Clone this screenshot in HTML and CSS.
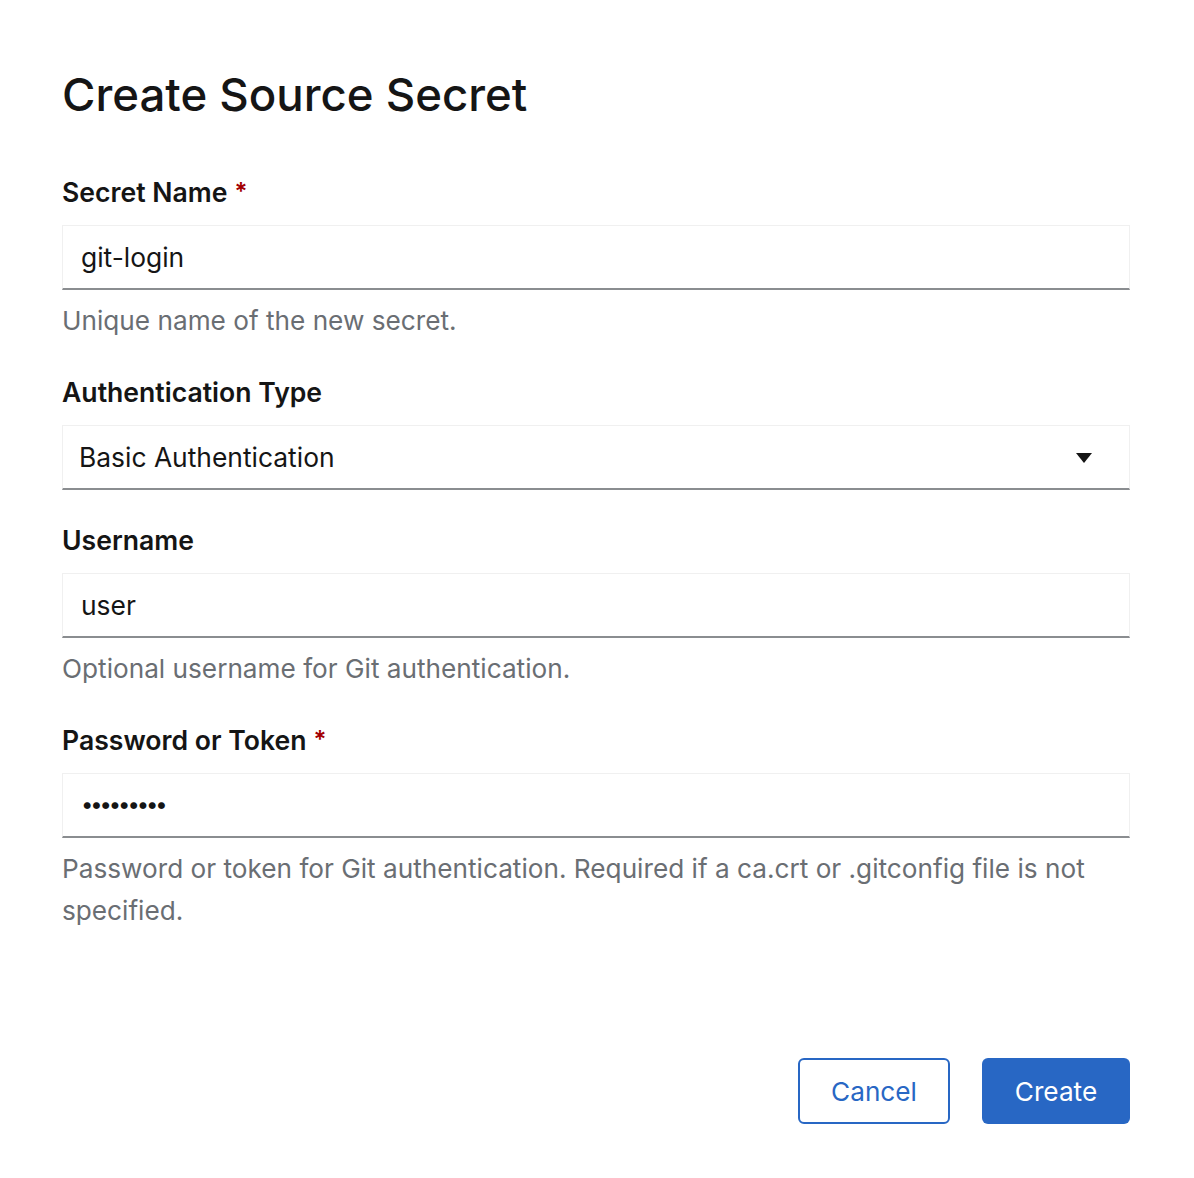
FILE: index.html
```html
<!DOCTYPE html>
<html lang="en">
<head>
<meta charset="utf-8">
<title>Create Source Secret</title>
<link rel="stylesheet" href="styles.css">
</head>
<body>
<div class="modal">
  <h1 class="modal-title">Create Source Secret</h1>
  <form class="form">
    <div class="group">
      <label class="label">Secret Name<span class="req">*</span></label>
      <div class="input"><span class="value">git-login</span></div>
      <div class="helper">Unique name of the new secret.</div>
    </div>
    <div class="group">
      <label class="label">Authentication Type</label>
      <div class="input select">
        <span class="value">Basic Authentication</span>
        <svg class="caret" width="16" height="10" viewBox="0 0 16 10"><path d="M0 0 H16 L8 10 Z" fill="#151515"/></svg>
      </div>
    </div>
    <div class="group">
      <label class="label">Username</label>
      <div class="input"><span class="value">user</span></div>
      <div class="helper">Optional username for Git authentication.</div>
    </div>
    <div class="group">
      <label class="label">Password or Token<span class="req">*</span></label>
      <div class="input"><span class="value dots">•••••••••</span></div>
      <div class="helper">Password or token for Git authentication. Required if a ca.crt or .gitconfig file is not specified.</div>
    </div>
  </form>
  <div class="footer">
    <button class="btn btn-secondary" type="button">Cancel</button>
    <button class="btn btn-primary" type="button">Create</button>
  </div>
</div>
</body>
</html>
```
FILE: styles.css
```css
html, body {
  margin: 0;
  background: #ffffff;
}
body {
  font-family: Inter, "Noto Sans", sans-serif;
  color: #151515;
}
.modal {
  width: 1068px;
  padding: 65px 0 0 62px;
}
.modal-title {
  margin: 0;
  font-size: 45.6px;
  line-height: 60px;
  font-weight: 500;
  color: #151515;
}
.form {
  display: flex;
  flex-direction: column;
  gap: 32px;
  margin-top: 49px;
}
.group {
  display: flex;
  flex-direction: column;
}
.label {
  font-size: 26.6px;
  line-height: 36px;
  font-weight: 600;
  color: #151515;
  margin-bottom: 15px;
}
.req {
  color: #a30000;
  margin-left: 7px;
  font-size: 24px;
  vertical-align: top;
}
.input {
  box-sizing: border-box;
  height: 65px;
  border: 1px solid #f0f0f0;
  border-bottom: 2px solid #8a8d90;
  display: flex;
  align-items: center;
  padding: 0 18px;
  font-size: 26.4px;
  color: #151515;
}
.select {
  padding: 0 37px 0 16px;
  justify-content: space-between;
}
.caret {
  display: block;
  margin-top: 2px;
}
.dots {
  font-size: 22px;
  letter-spacing: -3.1px;
  padding-bottom: 2px;
}
.helper {
  margin-top: 10px;
  font-size: 26.2px;
  line-height: 42px;
  color: #6a6e73;
}
.footer {
  display: flex;
  justify-content: flex-end;
  gap: 32px;
  margin-top: 126px;
}
.btn {
  box-sizing: border-box;
  height: 66px;
  border-radius: 6px;
  font-family: Inter, "Noto Sans", sans-serif;
  font-size: 26.2px;
  padding: 0;
  cursor: pointer;
}
.btn-secondary {
  width: 152px;
  background: #ffffff;
  border: 2px solid #2867c4;
  color: #2867c4;
}
.btn-primary {
  width: 148px;
  background: #2867c4;
  border: 0;
  color: #ffffff;
}
```
